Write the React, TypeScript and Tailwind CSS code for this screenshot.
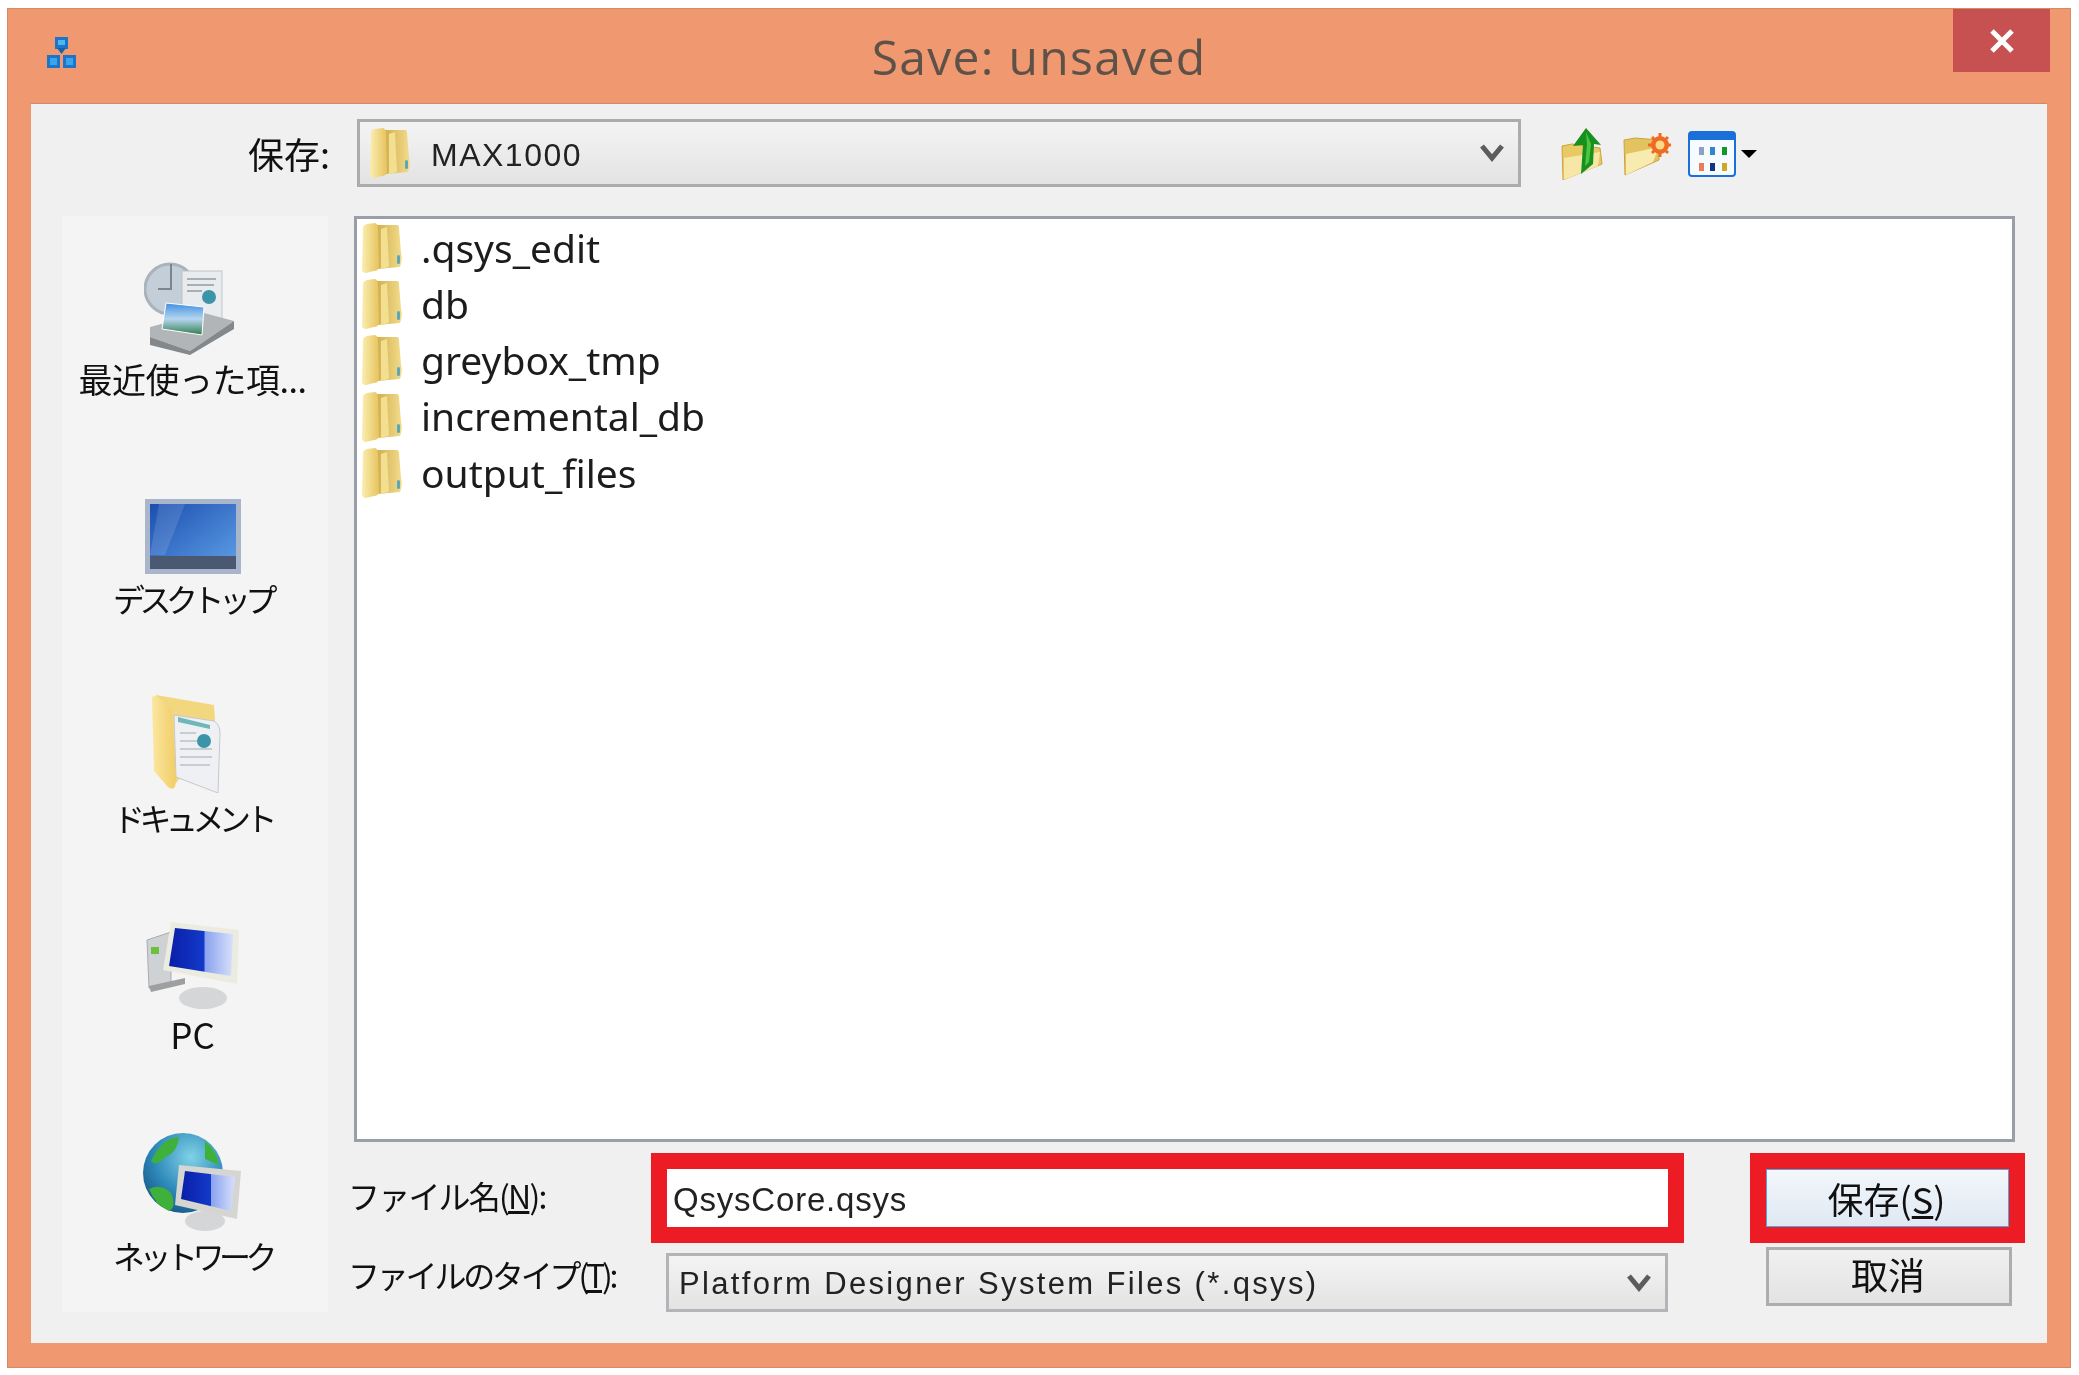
const jpFont = "font-['Noto_Sans_CJK_JP',sans-serif]";
const uiFont = "font-['Liberation_Sans','Noto_Sans_CJK_JP',sans-serif]";

function FolderIcon({ className }: { className: string }) {
  return (
    <svg viewBox="0 0 42 50" className={className}>
      <defs>
        <linearGradient id="folderFront" x1="0" y1="0" x2="1" y2="0">
          <stop offset="0" stopColor="#fbeeb0" />
          <stop offset="1" stopColor="#e6c35e" />
        </linearGradient>
        <linearGradient id="folderBack" x1="0" y1="0" x2="1" y2="0">
          <stop offset="0" stopColor="#c89f3c" />
          <stop offset="1" stopColor="#f2dc8c" />
        </linearGradient>
      </defs>
      <path d="M8 2 L36 2 Q38 2 38 5 L40 30 Q42 36 39 44 L16 46 Z" fill="url(#folderBack)" />
      <path d="M2 5 Q2 2 6 1 L14 0 Q17 1 17 5 L18 44 Q17 48 13 48 L5 50 Q1 50 1 46 Z" fill="url(#folderFront)" />
      <path d="M20 6 L26 4 L28 44 L20 46 Z" fill="#f3df90" />
      <rect x="36" y="32" width="3" height="9" rx="1.5" fill="#5fa6b4" />
    </svg>
  );
}

function AppIcon() {
  return (
    <svg viewBox="0 0 29 31" className="h-[31px] w-[29px]">
      <rect x="8" y="0" width="13" height="12" fill="#1c75c9" />
      <rect x="11" y="3" width="7" height="5" fill="#52b4f0" />
      <path d="M14.5 17 L10 11 L19 11 Z" fill="#1463ad" />
      <rect x="0" y="18" width="13" height="13" fill="#1c75c9" />
      <rect x="3" y="21" width="7" height="7" fill="#3ba4ea" />
      <rect x="16" y="18" width="13" height="13" fill="#1c75c9" />
      <rect x="19" y="21" width="7" height="7" fill="#3ba4ea" />
    </svg>
  );
}

function UpFolderIcon() {
  return (
    <svg viewBox="0 0 44 52" className="h-[52px] w-[44px]">
      <path d="M2 18 L12 16 L40 20 L42 36 L3 52 Z" fill="#e8c964" stroke="#c9a53f" strokeWidth="1" />
      <path d="M4 30 L40 24 L38 38 L4 52 Z" fill="#f7e7a6" />
      <path d="M26 0 L41 17 L34 16 L33 36 L21 46 L23 17 L13 18 Z" fill="#17901f" />
      <path d="M26 4 L31 16 L29 34 L25 38 L27 16 Z" fill="#4cc63f" />
    </svg>
  );
}

function NewFolderIcon() {
  return (
    <svg viewBox="0 0 48 44" className="h-[44px] w-[48px]">
      <path d="M1 8 L12 6 L36 8 L36 28 L2 43 Z" fill="#e3c260" stroke="#c9a53f" strokeWidth="1" />
      <path d="M3 22 L36 15 L30 30 L3 43 Z" fill="#f8ebb0" />
      <circle cx="37" cy="13" r="9" fill="#ef6a23" />
      <path d="M37 1 V25 M25 13 H48 M29 5 L45 21 M45 5 L29 21" stroke="#ef6a23" strokeWidth="3" />
      <circle cx="37" cy="13" r="4.5" fill="#fbd98a" />
    </svg>
  );
}

function ViewIcon() {
  const top = [
    { c: '#8f9fc7', x: 11 },
    { c: '#2f86cf', x: 22 },
    { c: '#0f9a25', x: 34 },
  ];
  const bottom = [
    { c: '#ef7a55', x: 11 },
    { c: '#15337f', x: 22 },
    { c: '#d0a72b', x: 34 },
  ];
  return (
    <svg viewBox="0 0 48 46" className="h-[46px] w-[48px]">
      <rect x="1" y="1" width="46" height="44" rx="3" fill="#f6fbff" stroke="#1b6fd8" strokeWidth="2" />
      <path d="M1 4 Q1 1 4 1 H44 Q47 1 47 4 V9 H1 Z" fill="#1b6fd8" />
      {top.map((r) => (
        <rect key={r.x} x={r.x} y="16" width="5" height="8" fill={r.c} />
      ))}
      {bottom.map((r) => (
        <rect key={r.x} x={r.x} y="32" width="5" height="8" fill={r.c} />
      ))}
    </svg>
  );
}

function Chevron() {
  return (
    <svg viewBox="0 0 24 18" className="h-[18px] w-[24px] shrink-0">
      <path d="M2 2 L12 14 L22 2" fill="none" stroke="#5c5c5c" strokeWidth="5" />
    </svg>
  );
}

function RecentIcon() {
  return (
    <svg viewBox="0 0 97 94" className="h-[94px] w-[97px]">
      <defs>
        <linearGradient id="photoBlue" x1="0" y1="0" x2="0" y2="1">
          <stop offset="0" stopColor="#3f8fe0" />
          <stop offset="0.5" stopColor="#b6d6ef" />
          <stop offset="1" stopColor="#2f7d4f" />
        </linearGradient>
      </defs>
      <circle cx="26" cy="28" r="25" fill="#c3ced8" stroke="#a8b3bd" strokeWidth="3" />
      <path d="M27 3 V28 H14" stroke="#7b858f" strokeWidth="2" fill="none" />
      <rect x="38" y="10" width="40" height="50" fill="#e9ecef" stroke="#bfc4c8" />
      <path d="M43 18 H72 M43 24 H70 M43 30 H58" stroke="#a9aeb3" strokeWidth="2" />
      <circle cx="65" cy="36" r="7" fill="#3c94a8" />
      <path d="M6 66 L60 52 L90 60 L46 90 L6 76 Z" fill="#b2b5b7" />
      <path d="M6 76 L46 90 L90 60 L90 68 L46 94 L6 84 Z" fill="#85888a" />
      <path d="M22 42 L60 46 L58 74 L18 68 Z" fill="url(#photoBlue)" stroke="#fff" strokeWidth="1" />
    </svg>
  );
}

function DesktopIcon() {
  return (
    <svg viewBox="0 0 96 75" className="h-[75px] w-[98px]">
      <defs>
        <linearGradient id="deskBlue" x1="0" y1="0" x2="1" y2="1">
          <stop offset="0" stopColor="#1b4fb0" />
          <stop offset="1" stopColor="#5f9fe6" />
        </linearGradient>
      </defs>
      <rect x="0" y="0" width="96" height="75" fill="#a9b5ca" />
      <rect x="5" y="5" width="86" height="65" fill="url(#deskBlue)" />
      <path d="M5 56 L14 5 L40 5 L20 56 Z" fill="#ffffff" opacity="0.12" />
      <rect x="5" y="57" width="86" height="13" fill="#4a5872" />
    </svg>
  );
}

function DocumentsIcon() {
  return (
    <svg viewBox="0 0 72 98" className="mr-[10px] h-[98px] w-[72px]">
      <defs>
        <linearGradient id="docFolder" x1="0" y1="0" x2="1" y2="0">
          <stop offset="0" stopColor="#fbe79f" />
          <stop offset="1" stopColor="#f1cd68" />
        </linearGradient>
      </defs>
      <path d="M4 0 L62 10 L64 40 L24 88 Z" fill="#f3d77f" />
      <path d="M22 20 L62 26 Q68 30 68 38 L66 98 L24 82 Z" fill="#eef0f4" stroke="#c5c8cc" />
      <path d="M26 22 L58 30 L58 34 L26 27 Z" fill="#6fb7b8" />
      <path d="M28 38 H44 M28 46 H46 M28 54 H60 M28 62 H60 M28 70 H58" stroke="#c9cdd2" strokeWidth="2" />
      <circle cx="52" cy="46" r="7" fill="#3c94a8" />
      <path d="M0 4 Q0 0 4 1 L20 14 L24 84 Q24 98 16 92 L2 76 Z" fill="url(#docFolder)" />
    </svg>
  );
}

function ScreenGlass() {
  return (
    <defs>
      <linearGradient id="glassBlue" x1="0" y1="0" x2="1" y2="0">
        <stop offset="0" stopColor="#0a1fa8" />
        <stop offset="0.55" stopColor="#1339c9" />
        <stop offset="0.56" stopColor="#8aa2ef" />
        <stop offset="1" stopColor="#d7e0fb" />
      </linearGradient>
    </defs>
  );
}

function PcIcon() {
  return (
    <svg viewBox="0 0 96 88" className="h-[88px] w-[96px]">
      <ScreenGlass />
      <path d="M2 18 L26 10 L26 62 L4 66 Z" fill="#cfd2d4" stroke="#a9acae" />
      <rect x="6" y="25" width="8" height="7" fill="#6fbf3e" />
      <path d="M4 64 L40 56 L40 62 L6 70 Z" fill="#9d9fa1" />
      <ellipse cx="58" cy="76" rx="24" ry="11" fill="#d4d6d8" />
      <path d="M26 0 L94 8 L92 62 L18 48 Z" fill="#ecebe0" />
      <path d="M30 6 L88 12 L86 54 L24 44 Z" fill="url(#glassBlue)" />
    </svg>
  );
}

function NetworkIcon() {
  return (
    <svg viewBox="0 0 100 100" className="h-[100px] w-[100px]">
      <ScreenGlass />
      <defs>
        <radialGradient id="globe" cx="0.6" cy="0.3" r="0.8">
          <stop offset="0" stopColor="#7fd2e6" />
          <stop offset="0.6" stopColor="#2b86b8" />
          <stop offset="1" stopColor="#14507e" />
        </radialGradient>
      </defs>
      <circle cx="40" cy="42" r="40" fill="url(#globe)" />
      <path d="M8 30 Q20 6 36 6 Q34 22 22 26 Q14 36 8 30 Z" fill="#3fb13a" />
      <path d="M6 58 Q18 52 28 62 Q34 76 26 80 Q12 74 6 58 Z" fill="#3fb13a" />
      <path d="M62 10 Q74 20 76 34 L62 28 Z" fill="#3fb13a" />
      <ellipse cx="62" cy="90" rx="20" ry="10" fill="#d4d6d8" />
      <path d="M36 34 L98 40 L94 88 L32 74 Z" fill="#d5d6d2" />
      <path d="M42 40 L92 46 L88 80 L38 68 Z" fill="url(#glassBlue)" />
    </svg>
  );
}

const places = [
  { label: '最近使った項...', icon: <RecentIcon />, box: 'h-[186px]', text: 'mb-[1px] text-[34px] tracking-[-0.5px]' },
  { label: 'デスクトップ', icon: <DesktopIcon />, box: 'h-[219px]', text: 'mb-[1px] text-[32px] tracking-[-5.5px]' },
  { label: 'ドキュメント', icon: <DocumentsIcon />, box: 'h-[219px]', text: 'mb-[1px] text-[32px] tracking-[-5.5px]' },
  { label: 'PC', icon: <PcIcon />, box: 'h-[219px]', text: 'mb-[3px] text-[35px]' },
  { label: 'ネットワーク', icon: <NetworkIcon />, box: 'h-[219px]', text: 'mb-[1px] text-[32px] tracking-[-5.5px]' },
];

const files = ['.qsys_edit', 'db', 'greybox_tmp', 'incremental_db', 'output_files'];

export default function App() {
  return (
    <div className="h-[1375px] w-[2079px] bg-white pl-[7px] pt-[8px] blur-[0.6px]">
      <div className="flex h-[1360px] w-[2064px] flex-col border border-[#d58a68] bg-[#f09870] px-[23px] pb-[24px]">
        {/* title bar */}
        <div className="-mx-[23px] grid h-[94px] shrink-0 grid-cols-[120px_1fr_120px]">
          <div className="pl-[39px] pt-[28px]">
            <AppIcon />
          </div>
          <div className="flex items-center justify-center pt-[2px] font-['Open_Sans',sans-serif] text-[48px] tracking-[1.3px] text-[#5e5148]">
            Save: unsaved
          </div>
          <div className="flex justify-end pr-[20px]">
            <div className="flex h-[63px] w-[97px] items-center justify-center bg-[#c75050]">
              <svg viewBox="0 0 26 24" className="h-[24px] w-[26px]">
                <path d="M3 2 L23 22 M23 2 L3 22" stroke="#fff" strokeWidth="5" />
              </svg>
            </div>
          </div>
        </div>

        {/* client area */}
        <div className="flex min-h-0 flex-1 flex-col border-t border-[#cf8a6c] bg-[#f0f0f0] pt-[15px]">
          <div className="flex h-[68px] items-center">
            <div className={`w-[299px] text-right text-[36px] text-[#111] ${jpFont}`}>保存:</div>
            <div className="ml-[27px] flex h-[68px] w-[1164px] items-center border-[3px] border-[#acacac] bg-gradient-to-b from-[#f4f4f4] to-[#e3e3e3] pl-[9px] pr-[14px]">
              <FolderIcon className="h-[50px] w-[42px]" />
              <span className={`ml-[20px] flex-1 pt-[3px] text-[32px] tracking-[1.5px] text-[#222] ${uiFont}`}>MAX1000</span>
              <Chevron />
            </div>
            <div className="ml-[39px] mt-[2px] flex items-center">
              <UpFolderIcon />
              <div className="ml-[19px]">
                <NewFolderIcon />
              </div>
              <div className="ml-[17px]">
                <ViewIcon />
              </div>
              <div className="ml-[5px] h-0 w-0 border-x-[8px] border-t-[8px] border-x-transparent border-t-black" />
            </div>
          </div>

          <div className="mt-[29px] flex min-h-0 flex-1">
            {/* places bar */}
            <div className="ml-[31px] flex h-[1096px] w-[266px] flex-col bg-[#f4f4f4] pr-[5px]">
              {places.map((p) => (
                <div key={p.label} className={`flex shrink-0 flex-col items-center justify-end ${p.box}`}>
                  {p.icon}
                  <div className={`mt-[2px] leading-[44px] text-[#111] ${jpFont} ${p.text}`}>{p.label}</div>
                </div>
              ))}
            </div>

            <div className="ml-[26px] w-[1661px]">
              {/* file list */}
              <div className="h-[926px] border-[3px] border-[#9a9ea8] bg-white pl-[4px] pt-[1px]">
                {files.map((f) => (
                  <div key={f} className="flex h-[56.2px] items-center">
                    <FolderIcon className="h-[50px] w-[42px]" />
                    <span className="ml-[18px] font-['Noto_Sans',sans-serif] text-[39px] text-[#1c1c1c]">{f}</span>
                  </div>
                ))}
              </div>

              {/* file name row */}
              <div className="mt-[11px] flex h-[90px] items-start">
                <div className={`-ml-[6px] w-[303px] shrink-0 pt-[20px] text-[32px] leading-[44px] tracking-[-1.8px] text-[#111] ${jpFont}`}>
                  ファイル名(<span className="underline">N</span>):
                </div>
                <div className="h-[90px] w-[1033px] shrink-0 border-[16px] border-[#ed1c24] bg-white pl-[6px]">
                  <div className="flex h-[58px] items-center pt-[3px] font-['Liberation_Sans',sans-serif] text-[33px] tracking-[0.8px] text-[#222]">
                    QsysCore.qsys
                  </div>
                </div>
                <div className="ml-[66px] h-[90px] w-[275px] shrink-0 border-[16px] border-[#ed1c24]">
                  <div className={`flex h-[58px] items-center justify-center border border-[#4ea6e0] bg-gradient-to-b from-[#f3f7fb] to-[#dfe8f3] pr-[2px] text-[36px] text-[#111] ${jpFont}`}>
                    保存(<span className="underline">S</span>)
                  </div>
                </div>
              </div>

              {/* file type row */}
              <div className="flex items-start">
                <div className={`-ml-[6px] w-[318px] shrink-0 pt-[9px] text-[32px] leading-[44px] tracking-[-3.2px] text-[#111] ${jpFont}`}>
                  ファイルのタイプ(<span className="underline">T</span>):
                </div>
                <div className="mt-[10px] flex h-[59px] w-[1002px] shrink-0 items-center border-[3px] border-[#b4b4b8] bg-gradient-to-b from-[#f4f4f4] to-[#e3e3e3] pl-[10px] pr-[14px]">
                  <span className="flex-1 pt-[3px] font-['Liberation_Sans',sans-serif] text-[31px] tracking-[2.35px] text-[#222]">
                    Platform Designer System Files (*.qsys)
                  </span>
                  <Chevron />
                </div>
                <div className={`ml-[98px] mt-[4px] flex h-[59px] w-[246px] shrink-0 items-center justify-center border-[3px] border-[#adadad] bg-gradient-to-b from-[#f0f0f0] to-[#e3e3e3] pb-[3px] pr-[2px] text-[37px] text-[#111] ${jpFont}`}>
                  取消
                </div>
              </div>
            </div>
          </div>
        </div>
      </div>
    </div>
  );
}
